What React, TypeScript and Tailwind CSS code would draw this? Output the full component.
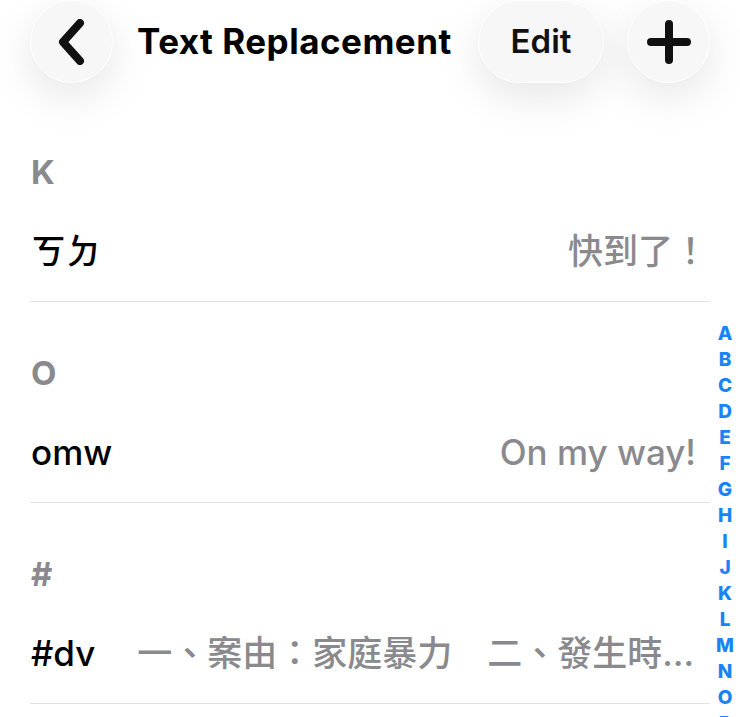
import React from "react";

const sans = "font-['Inter','Noto_Sans_CJK_TC',sans-serif]";

type Item = { key: string; value: string; valueClass?: string };
type Section = { letter: string; items: Item[] };

const sections: Section[] = [
  { letter: "K", items: [{ key: "ㄎㄉ", value: "快到了！", valueClass: "-mr-[12px]" }] },
  { letter: "O", items: [{ key: "omw", value: "On my way!" }] },
  {
    letter: "#",
    items: [
      {
        key: "#dv",
        value: "一、案由：家庭暴力　二、發生時間：民國一一三年",
      },
    ],
  },
];

const letters = "ABCDEFGHIJKLMNOPQRSTUVWXYZ#".split("");

function CircleButton({ children }: { children: React.ReactNode }) {
  return (
    <div className="flex h-[83px] w-[83px] shrink-0 items-center justify-center rounded-full border border-white bg-[#f7f7f7] shadow-[0_14px_44px_rgba(0,0,0,0.10)]">
      {children}
    </div>
  );
}

export default function App() {
  return (
    <div className={`relative min-h-[717px] w-[740px] overflow-hidden bg-white ${sans}`}>
      <header className="flex h-[101px] items-start px-[30px]">
        <CircleButton>
          <svg width="34" height="46" viewBox="0 0 34 46" fill="none">
            <path d="M25 4 L8 23 L25 42" stroke="#111" strokeWidth="8" strokeLinecap="round" strokeLinejoin="round" />
          </svg>
        </CircleButton>
        <div className="ml-[24px] flex h-[83px] items-center text-[35px] font-bold tracking-[0.5px] text-black">
          Text Replacement
        </div>
        <div className="ml-auto flex h-[83px] w-[126px] items-center justify-center rounded-full border border-white bg-[#f7f7f7] text-[33px] font-semibold text-[#111] shadow-[0_14px_44px_rgba(0,0,0,0.10)]">
          Edit
        </div>
        <div className="ml-[23px]">
          <CircleButton>
            <svg width="44" height="44" viewBox="0 0 44 44" fill="none">
              <path d="M22 4 V40 M4 22 H40" stroke="#111" strokeWidth="8" strokeLinecap="round" />
            </svg>
          </CircleButton>
        </div>
      </header>

      <main className="px-[30px]">
        {sections.map((s) => (
          <section key={s.letter}>
            <div className="h-[100px] pl-[1px] pt-[55px] text-[33px] font-bold leading-[33px] text-[#8a8a8e]">
              {s.letter}
            </div>
            {s.items.map((it) => (
              <div
                key={it.key}
                className="flex h-[101px] items-center gap-[42px] border-b border-[#e2e2e4] pl-[1px] pr-[14px] text-[35px] font-medium leading-[42px]"
              >
                <span className="shrink-0 text-black">{it.key}</span>
                <span className={`ml-auto min-w-0 truncate text-right text-[#8a8a8e] ${it.valueClass ?? ""}`}>
                  {it.value}
                </span>
              </div>
            ))}
          </section>
        ))}
      </main>

      <nav className="absolute right-0 top-[321px] flex w-[30px] flex-col items-center">
        {letters.map((l) => (
          <span key={l} className="block h-[26px] text-[19px] font-extrabold leading-[26px] text-[#1a84f5]">
            {l}
          </span>
        ))}
      </nav>
    </div>
  );
}
